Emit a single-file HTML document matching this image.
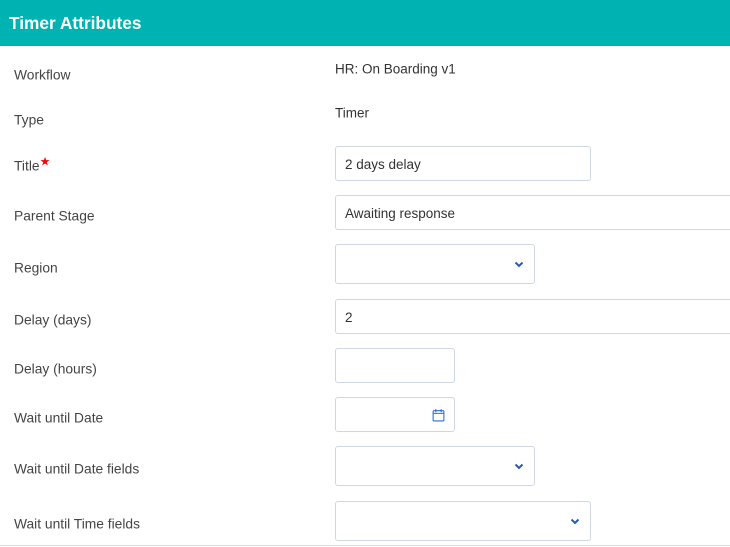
<!DOCTYPE html>
<html><head><style>
body{margin:0;width:730px;height:547px;overflow:hidden;background:#fff;font-family:"Liberation Sans",sans-serif;position:relative}
.h{position:absolute;left:0;top:0;width:730px;height:46px;background:#00b3b3;color:#fff;font-weight:bold;font-size:17.3px;line-height:46px;padding-left:9px;box-sizing:border-box}
.l{position:absolute;left:14px;font-size:13.8px;color:#444;transform:translateY(-45%)}
.v{position:absolute;left:335px;font-size:13.5px;color:#333;transform:translateY(-45%)}
.b{position:absolute;left:335px;border:1px solid #cfd6e4;border-radius:3px;box-sizing:border-box;font-size:13.5px;color:#333;padding-left:9px;padding-top:2px;display:flex;align-items:center}
.c{position:absolute;right:9px;top:50%;transform:translateY(-50%)}
.line{position:absolute;left:0;top:545px;width:730px;height:1px;background:#ddd}
</style></head><body>
<div class="h">Timer Attributes</div>
<div class="l" style="top:74px">Workflow</div>
<div class="v" style="top:68px">HR: On Boarding v1</div>
<div class="l" style="top:119px">Type</div>
<div class="v" style="top:112px">Timer</div>
<div class="l" style="top:165px">Title<span style="color:red;font-size:12px;position:relative;top:-5px">★</span></div>
<div class="b" style="top:146px;width:256px;height:35px">2 days delay</div>
<div class="l" style="top:215px">Parent Stage</div>
<div class="b" style="top:195px;width:400px;height:35px">Awaiting response</div>
<div class="l" style="top:267px">Region</div>
<div class="b" style="top:244px;width:200px;height:40px"><svg class="c" width="12" height="8" viewBox="0 0 12 8"><path d="M2.5 2.5l3.5 3.5 3.5-3.5" stroke="#2a5db0" stroke-width="2" fill="none"/></svg></div>
<div class="l" style="top:319px">Delay (days)</div>
<div class="b" style="top:299px;width:400px;height:35px">2</div>
<div class="l" style="top:368px">Delay (hours)</div>
<div class="b" style="top:348px;width:120px;height:35px"></div>
<div class="l" style="top:417px">Wait until Date</div>
<div class="b" style="top:397px;width:120px;height:35px"><svg class="c" width="13" height="14" viewBox="0 0 12 13"><rect x="1" y="2.5" width="10" height="9.5" rx="1" stroke="#2a6fd6" fill="none"/><path d="M1 5h10M3.5 1v3M8.5 1v3" stroke="#2a6fd6"/></svg></div>
<div class="l" style="top:468px">Wait until Date fields</div>
<div class="b" style="top:446px;width:200px;height:40px"><svg class="c" width="12" height="8" viewBox="0 0 12 8"><path d="M2.5 2.5l3.5 3.5 3.5-3.5" stroke="#2a5db0" stroke-width="2" fill="none"/></svg></div>
<div class="l" style="top:523px">Wait until Time fields</div>
<div class="b" style="top:501px;width:256px;height:40px"><svg class="c" width="12" height="8" viewBox="0 0 12 8"><path d="M2.5 2.5l3.5 3.5 3.5-3.5" stroke="#2a5db0" stroke-width="2" fill="none"/></svg></div>
<div class="line"></div>
</body></html>
